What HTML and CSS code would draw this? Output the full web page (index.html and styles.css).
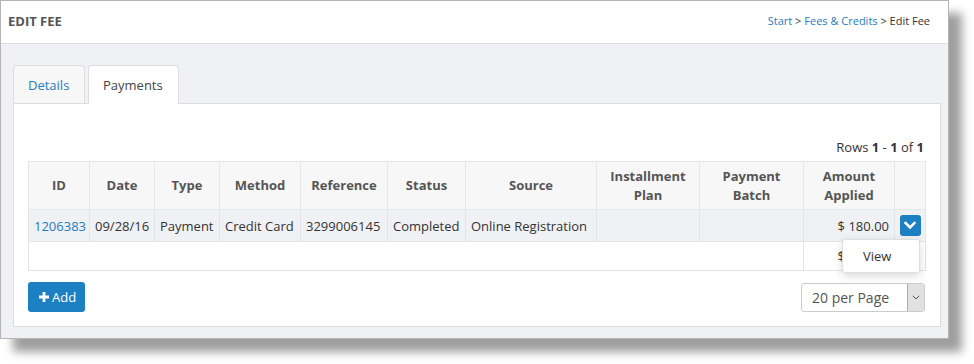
FILE: index.html
```html
<!DOCTYPE html>
<html>
<head>
<meta charset="utf-8">
<link rel="stylesheet" href="styles.css">
</head>
<body>
<div class="window">
  <div class="page-header">
    <h1 class="title">EDIT FEE</h1>
    <div class="crumbs"><a class="link">Start</a> &gt; <a class="link">Fees &amp; Credits</a> &gt; Edit Fee</div>
  </div>
  <div class="page-body">
    <div class="tabs">
      <div class="tab">Details</div>
      <div class="tab active">Payments</div>
    </div>
    <div class="panel">
      <div class="rows-info">Rows <b>1</b> - <b>1</b> of <b>1</b></div>
      <table class="grid">
        <colgroup>
          <col style="width:61px"><col style="width:65px"><col style="width:65px"><col style="width:81px"><col style="width:87px"><col style="width:78px"><col style="width:131px"><col style="width:103px"><col style="width:104px"><col style="width:91px"><col style="width:31px">
        </colgroup>
        <thead>
          <tr>
            <th>ID</th><th>Date</th><th>Type</th><th>Method</th><th>Reference</th><th>Status</th><th>Source</th><th>Installment Plan</th><th>Payment Batch</th><th>Amount Applied</th><th></th>
          </tr>
        </thead>
        <tbody>
          <tr class="data">
            <td><a class="link">1206383</a></td><td>09/28/16</td><td>Payment</td><td>Credit Card</td><td>3299006145</td><td>Completed</td><td>Online Registration</td><td></td><td></td><td class="num">$ 180.00</td>
            <td class="act">
              <div class="act-wrap">
                <span class="dd-btn"><svg width="12" height="9" viewBox="0 0 12 9"><path d="M1.5 2 L6 6.5 L10.5 2" fill="none" stroke="#fff" stroke-width="2.6" stroke-linecap="square"/></svg></span>
                <div class="menu"><div class="menu-item">View</div></div>
              </div>
            </td>
          </tr>
          <tr class="total">
            <td colspan="9"></td><td class="num">$ 180.00</td><td></td>
          </tr>
        </tbody>
      </table>
      <div class="footer-bar">
        <span class="btn-add"><svg width="10" height="10" viewBox="0 0 10 10"><path d="M3.6 0h2.8v3.6H10v2.8H6.4V10H3.6V6.4H0V3.6h3.6z" fill="#fff"/></svg>Add</span>
        <div class="select"><span class="select-text">20 per Page</span><span class="select-arrow"><svg width="8" height="5" viewBox="0 0 8 5"><path d="M0.8 0.8 L4 4 L7.2 0.8" fill="none" stroke="#555" stroke-width="1"/></svg></span></div>
      </div>
    </div>
  </div>
</div>
</body>
</html>
```
FILE: styles.css
```css
html, body {
  margin: 0;
  padding: 0;
  background: #fff;
}
body {
  font-family: "Open Sans", "DejaVu Sans", sans-serif;
  font-size: 13px;
  color: #333;
  min-height: 364px;
}
.window {
  box-sizing: border-box;
  width: 949px;
  height: 339px;
  border: 1px solid #b5b5b5;
  background: #f0f1f5;
  box-shadow: 13px 13px 9px rgba(0, 0, 0, 0.38);
  display: flex;
  flex-direction: column;
}
.page-header {
  height: 43px;
  background: #fff;
  border-bottom: 1px solid #dcdde0;
  display: flex;
  justify-content: space-between;
  align-items: flex-start;
  padding: 10px 18px 0 7px;
  box-sizing: border-box;
}
.title {
  margin: 0;
  font-size: 13px;
  font-weight: 700;
  color: #555;
  line-height: 20px;
}
.crumbs {
  font-size: 11px;
  color: #333;
  line-height: 20px;
}
.link {
  color: #1f7cc0;
  text-decoration: none;
}
.page-body {
  padding: 21px 7px 0 12px;
}
.tabs {
  display: flex;
  gap: 3px;
  height: 38px;
  position: relative;
  z-index: 1;
}
.tab {
  box-sizing: border-box;
  height: 38px;
  padding: 0 14px;
  border: 1px solid #dcdde0;
  border-bottom: none;
  border-radius: 4px 4px 0 0;
  background: #f7f7f7;
  color: #1f7cc0;
  line-height: 38px;
}
.tab.active {
  height: 39px;
  background: #fff;
  color: #444;
  padding: 0 14px;
}
.tab:first-child { width: 72px; }
.tab.active { width: 91px; }
.panel {
  box-sizing: border-box;
  height: 224px;
  background: #fff;
  border: 1px solid #dcdde0;
  padding: 34px 15px 0 14px;
}
.rows-info {
  text-align: right;
  line-height: 18px;
  margin-bottom: 5px;
  padding-right: 1px;
  color: #333;
}
.grid {
  width: 897px;
  table-layout: fixed;
  border-collapse: collapse;
  border: 1px solid #e3e4e6;
}
.grid th {
  background: #f7f7f7;
  color: #555;
  font-weight: 700;
  line-height: 19px;
  height: 47px;
  padding: 0 5px;
  border: 1px solid #e6e7ea;
  text-align: center;
  vertical-align: middle;
}
.grid td {
  border: 1px solid #e3e4e6;
  padding: 0 5px;
  white-space: nowrap;
}
.data td {
  background: #eff1f5;
  height: 31px;
  color: #333;
}
.total td {
  height: 28px;
  background: #fff;
}
.num { text-align: right; }
.grid td.act {
  padding: 0;
  text-align: center;
}
.act-wrap {
  position: relative;
  display: flex;
  justify-content: center;
}
.dd-btn {
  width: 21px;
  height: 21px;
  border-radius: 3px;
  background: #1c80c2;
  display: flex;
  align-items: center;
  justify-content: center;
}
.menu {
  position: absolute;
  top: 24px;
  right: 5px;
  width: 78px;
  box-sizing: border-box;
  background: #fff;
  border: 1px solid #dedfe2;
  border-radius: 3px;
  box-shadow: 0 3px 10px rgba(0, 0, 0, 0.15);
  padding: 6px 0;
  z-index: 5;
}
.menu-item {
  line-height: 20px;
  text-align: left;
  padding-left: 20px;
  color: #333;
}
.footer-bar {
  margin-top: 11px;
  display: flex;
  justify-content: space-between;
  align-items: flex-start;
}
.btn-add {
  box-sizing: border-box;
  width: 57px;
  height: 30px;
  border-radius: 3px;
  background: #1c80c2;
  color: #fff;
  display: flex;
  align-items: center;
  padding-left: 11px;
  gap: 3px;
  line-height: 30px;
}
.select {
  box-sizing: border-box;
  margin-top: 1px;
  width: 124px;
  height: 29px;
  border: 1px solid #ccc;
  border-radius: 3px;
  display: flex;
  align-items: stretch;
  background: #fff;
}
.select-text {
  flex: 1;
  font-size: 14px;
  color: #555;
  line-height: 27px;
  padding-left: 10px;
}
.select-arrow {
  width: 16px;
  background: #e1e1e1;
  border-left: 1px solid #aaa;
  border-radius: 0 2px 2px 0;
  display: flex;
  align-items: center;
  justify-content: center;
}
```
